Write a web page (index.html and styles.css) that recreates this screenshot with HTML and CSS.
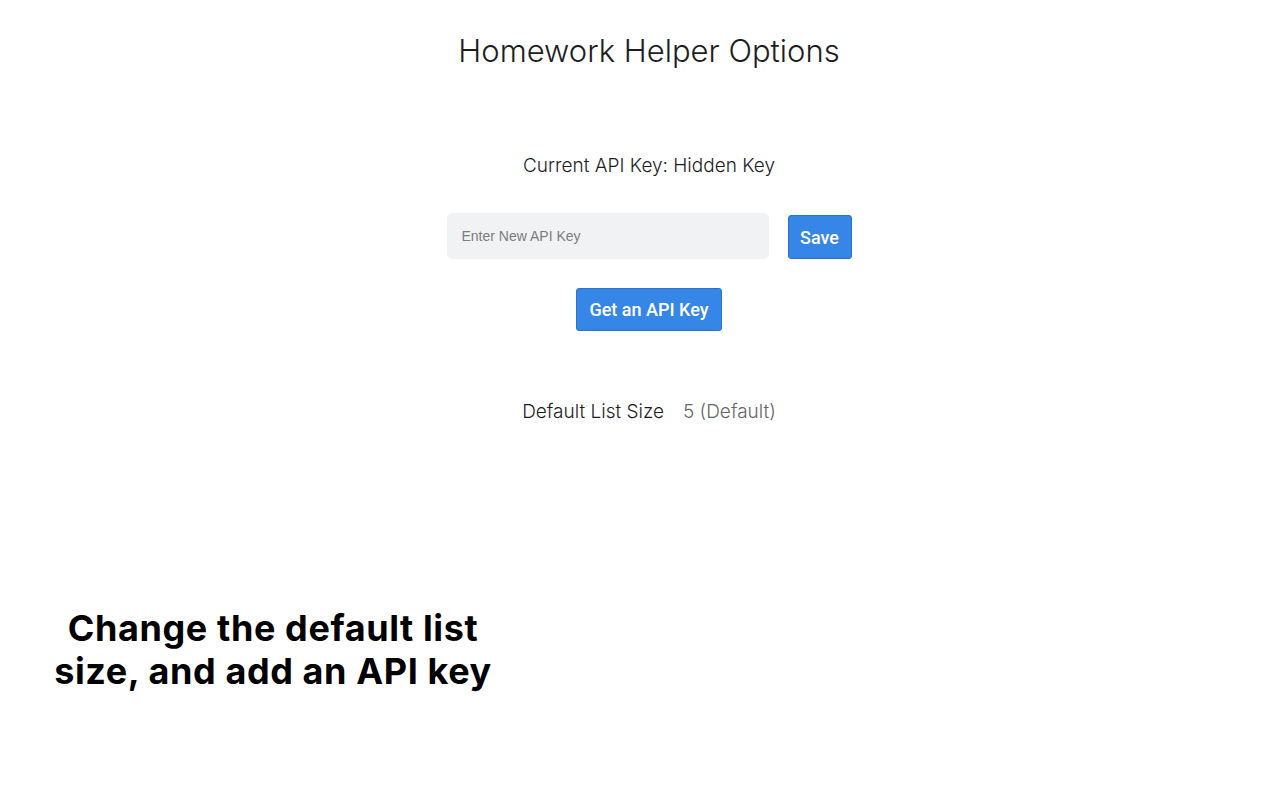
FILE: index.html
```html
<!DOCTYPE html>
<html lang="en">
<head>
<meta charset="utf-8">
<title>Homework Helper Options</title>
<link rel="stylesheet" href="styles.css">
</head>
<body>
<main class="page">
  <section class="options">
    <h1 class="title">Homework Helper Options</h1>
    <p class="current-key">Current API Key: Hidden Key</p>
    <div class="key-row">
      <input class="key-input" type="text" placeholder="Enter New API Key">
      <button class="btn btn-save">Save</button>
    </div>
    <button class="btn btn-get">Get an API Key</button>
    <div class="list-size">
      <span class="list-label">Default List Size</span>
      <span class="list-value">5 (Default)</span>
    </div>
  </section>
  <section class="caption">
    <p class="caption-text">Change the default list<br>size, and add an API key</p>
  </section>
</main>
</body>
</html>
```
FILE: styles.css
```css
html, body {
  margin: 0;
  padding: 0;
  background: #ffffff;
}
body {
  width: 1280px;
  height: 800px;
  overflow: hidden;
  font-family: Inter, "Noto Sans", sans-serif;
  color: #1d1d1f;
}
.page {
  display: flex;
  flex-direction: column;
}
.options {
  display: flex;
  flex-direction: column;
  align-items: center;
  margin-left: 17px;
  width: 1264px;
}
.title {
  margin: 31px 0 0;
  font-weight: 300;
  font-size: 31px;
  line-height: 40px;
  color: #1d1d1f;
}
.current-key {
  margin: 83px 0 0;
  font-weight: 300;
  font-size: 19px;
  line-height: 24px;
}
.key-row {
  display: flex;
  align-items: center;
  gap: 19px;
  margin-top: 35px;
}
.key-input {
  box-sizing: border-box;
  width: 322px;
  height: 46px;
  border: none;
  border-radius: 5px;
  background: #f1f2f4;
  padding: 0 15px;
  font-family: "Liberation Sans", Arial, sans-serif;
  font-size: 14px;
  color: #333;
  outline: none;
}
.key-input::placeholder {
  color: #7a7c80;
}
.btn {
  box-sizing: border-box;
  border: 1px solid #2a72cf;
  border-radius: 3px;
  background: #3686e8;
  color: #ffffff;
  font-family: Roboto, "Liberation Sans", Arial, sans-serif;
  font-size: 18px;
  font-weight: 500;
  padding: 0;
  cursor: pointer;
}
.btn-save {
  width: 64px;
  height: 44px;
  margin-top: 2px;
}
.btn-get {
  width: 146px;
  height: 43px;
  margin-top: 29px;
}
.list-size {
  display: flex;
  gap: 19px;
  margin-top: 69px;
  font-size: 19px;
  font-weight: 300;
  line-height: 24px;
}
.list-label {
  color: #1d1d1f;
}
.list-value {
  color: #666666;
}
.caption {
  margin-top: 183px;
  width: 546px;
  text-align: center;
}
.caption-text {
  margin: 0;
  font-family: Inter, "Noto Sans", sans-serif;
  font-weight: 700;
  font-size: 36px;
  line-height: 43px;
  color: #000000;
  letter-spacing: 0.6px;
}
```
